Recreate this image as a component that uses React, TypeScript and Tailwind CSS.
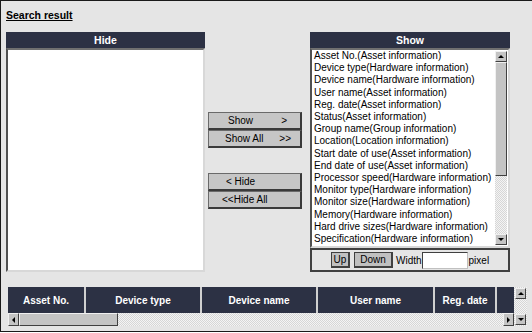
import React from 'react';

const SHOW_ITEMS = [
  'Asset No.(Asset information)',
  'Device type(Hardware information)',
  'Device name(Hardware information)',
  'User name(Asset information)',
  'Reg. date(Asset information)',
  'Status(Asset information)',
  'Group name(Group information)',
  'Location(Location information)',
  'Start date of use(Asset information)',
  'End date of use(Asset information)',
  'Processor speed(Hardware information)',
  'Monitor type(Hardware information)',
  'Monitor size(Hardware information)',
  'Memory(Hardware information)',
  'Hard drive sizes(Hardware information)',
  'Specification(Hardware information)',
];

const COLUMNS: { label: string; w: string }[] = [
  { label: 'Asset No.', w: 'w-[78px]' },
  { label: 'Device type', w: 'w-[116px]' },
  { label: 'Device name', w: 'w-[116px]' },
  { label: 'User name', w: 'w-[117px]' },
  { label: 'Reg. date', w: 'w-[62px]' },
];

// ─── Scrollbar bits ──────────────────────────────────────────────────────────

const TRACK =
  'bg-[repeating-conic-gradient(#d6d6d6_0%_25%,#f4f4f4_0%_50%)] bg-[length:2px_2px]';

function Arrow({ dir, className = '' }: { dir: 'up' | 'down' | 'left' | 'right'; className?: string }) {
  const tri = {
    up: 'border-l-[3px] border-r-[3px] border-b-[3px] border-l-transparent border-r-transparent border-b-black',
    down: 'border-l-[3px] border-r-[3px] border-t-[3px] border-l-transparent border-r-transparent border-t-black',
    left: 'border-t-[3px] border-b-[3px] border-r-[3px] border-t-transparent border-b-transparent border-r-black',
    right: 'border-t-[3px] border-b-[3px] border-l-[3px] border-t-transparent border-b-transparent border-l-black',
  }[dir];
  return (
    <div
      className={`flex items-center justify-center bg-[#c4c4c4] border border-t-[#f0f0f0] border-l-[#f0f0f0] border-b-[#404040] border-r-[#404040] ${className}`}
    >
      <div className={`w-0 h-0 ${tri}`} />
    </div>
  );
}

function Thumb({ className = '' }: { className?: string }) {
  return (
    <div
      className={`bg-[#c4c4c4] border border-t-[#f0f0f0] border-l-[#f0f0f0] border-b-[#404040] border-r-[#404040] ${className}`}
    />
  );
}

// ─── Panels ──────────────────────────────────────────────────────────────────

function PanelHeader({ title }: { title: string }) {
  return (
    <div className="h-[16px] bg-[#2c3144] text-white text-[10.5px] font-bold leading-[16px] text-center">
      {title}
    </div>
  );
}

function MoveButton({ label, arrow, pl, pr }: { label: string; arrow?: string; pl: string; pr?: string }) {
  return (
    <button
      className={`w-[94px] h-[18px] flex items-center justify-between bg-[#c6c6c6] border border-[#6a6a6a] border-b-2 border-r-2 border-b-[#3a3a3a] border-r-[#3a3a3a] text-[10px] text-black leading-none ${pl} ${pr ?? ''}`}
    >
      <span>{label}</span>
      {arrow && <span>{arrow}</span>}
    </button>
  );
}

export default function App() {
  return (
    <div className="w-[532px] h-[332px] bg-[#e5e5e5] border-t border-l border-b border-[#1a1a1a] overflow-hidden font-['Liberation_Sans',Arial,sans-serif] text-black">
      {/* ── Título ─────────────────────────────────────────────────── */}
      <div className="pl-[5px] pt-[8px] h-[31px] text-[10.5px] leading-[12px]">
        <span className="font-bold underline">Search result</span>
      </div>

      {/* ── Hide / botões / Show ───────────────────────────────────── */}
      <div className="flex pl-[5px]">
        <div className="w-[199px] flex flex-col">
          <PanelHeader title="Hide" />
          <div className="h-[224px] bg-white border-2 border-t-[#707070] border-l-[#505050] border-r-[#d8d8d8] border-b-[#d8d8d8]" />
        </div>

        <div className="ml-[3px] mt-[80px] flex flex-col">
          <MoveButton label="Show" arrow=">" pl="pl-[19px]" pr="pr-[13px]" />
          <MoveButton label="Show All" arrow=">>" pl="pl-[16px]" pr="pr-[9px]" />
          <div className="h-[25px]" />
          <MoveButton label="< Hide" pl="pl-[17px]" />
          <MoveButton label="<<Hide All" pl="pl-[13px]" />
        </div>

        <div className="ml-[8px] w-[200px] flex flex-col">
          <PanelHeader title="Show" />
          <div className="h-[200px] bg-white flex border-2 border-t-[#707070] border-l-[#505050] border-r-[#d8d8d8] border-b-[#d8d8d8]">
            <div className="flex-1 pl-[2px] text-[10px] leading-[12.2px] whitespace-nowrap overflow-hidden">
              {SHOW_ITEMS.map((item) => (
                <div key={item}>{item}</div>
              ))}
            </div>
            <div className="w-[12px] mr-[1px] my-[1px] flex flex-col">
              <Arrow dir="up" className="h-[11px]" />
              <Thumb className="h-[114px]" />
              <div className={`flex-1 ${TRACK}`} />
              <Arrow dir="down" className="h-[11px]" />
            </div>
          </div>
          <div className="h-[24px] flex items-center border-2 border-[#404040] pl-[19px]">
            <button className="w-[19px] h-[16px] bg-[#c0c0c0] border border-[#404040] border-b-2 border-r-2 text-[10px] leading-none">
              Up
            </button>
            <button className="ml-[4px] w-[39px] h-[16px] bg-[#c0c0c0] border border-[#404040] border-b-2 border-r-2 text-[10px] leading-none">
              Down
            </button>
            <span className="ml-[3px] text-[10px]">Width</span>
            <div className="w-[46px] h-[17px] bg-white border border-t-[#404040] border-l-[#404040] border-b-[#c0c0c0] border-r-[#c0c0c0]" />
            <span className="ml-[1px] text-[10px]">pixel</span>
          </div>
        </div>
      </div>

      {/* ── Tabela de resultado ────────────────────────────────────── */}
      <div className="mt-[15px] ml-[7px] w-[519px] flex">
        <div className="flex-1 flex flex-col">
          <div className="h-[26px] flex bg-[#2c3144]">
            {COLUMNS.map(({ label, w }) => (
              <div
                key={label}
                className={`${w} h-full flex items-center justify-center border-r-2 border-[#d0d0d0] text-white text-[10px] font-bold`}
              >
                {label}
              </div>
            ))}
            <div className="flex-1" />
          </div>
          <div className="h-[13px] flex">
            <Arrow dir="left" className="w-[11px]" />
            <Thumb className="w-[99px]" />
            <div className={`flex-1 ${TRACK}`} />
            <Arrow dir="right" className="w-[11px]" />
          </div>
        </div>
        <div className={`w-[13px] flex flex-col ${TRACK}`}>
          <Arrow dir="up" className="h-[11px] mt-[1px] mx-[1px]" />
          <div className="flex-1" />
          <Arrow dir="down" className="h-[11px] mx-[1px] mb-[1px]" />
        </div>
      </div>
    </div>
  );
}
